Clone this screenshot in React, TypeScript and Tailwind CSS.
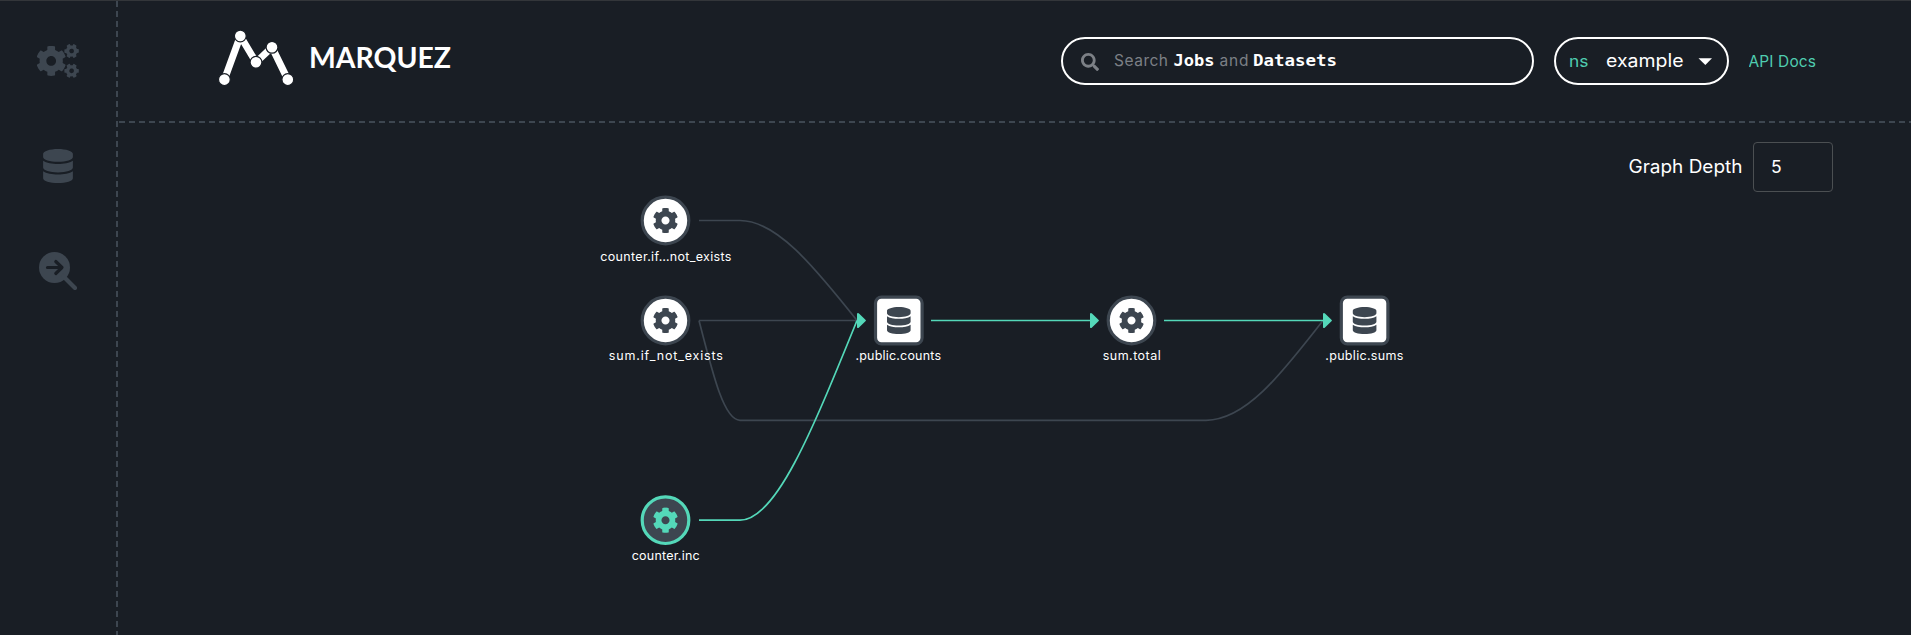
import { FaDatabase, FaSearch, FaCog } from 'react-icons/fa';

type GraphNode = { x: number; y: number; label: string; width: number; labelX: number; kind: 'job' | 'dataset'; selected?: boolean };

const nodes: GraphNode[] = [
  { x: 665.5, y: 220.5, label: 'counter.if…not_exists', width: 131, labelX: 600.3, kind: 'job' },
  { x: 665.5, y: 320.5, label: 'sum.if_not_exists', width: 114, labelX: 608.8, kind: 'job' },
  { x: 898.8, y: 320.5, label: '.public.counts', width: 85.5, labelX: 855.5, kind: 'dataset' },
  { x: 1131.5, y: 320.5, label: 'sum.total', width: 58, labelX: 1102.7, kind: 'job' },
  { x: 1364.6, y: 320.5, label: '.public.sums', width: 78, labelX: 1325.3, kind: 'dataset' },
  { x: 665.5, y: 520.2, label: 'counter.inc', width: 68, labelX: 631.7, kind: 'job', selected: true },
];

const grayEdges = [
  'M699 220.5H740C776 220.5 813 265 857 320.5',
  'M699 320.5H857',
  'M699 320.5C713 375 724 420.3 740 420.3H1206C1245 420.3 1280 376 1323 320.5',
];
const greenEdges = ['M699 520.2H740C776 520.2 812 431 857 320.5', 'M931 320.5H1091', 'M1164 320.5H1324'];
const arrows = [857, 1090, 1323];

function Logo() {
  const dots = [[24.4, 69.6], [40.3, 26], [56, 52.3], [72, 37.3], [87.8, 69.6]];
  return (
    <svg className="h-[64px] w-[80px] shrink-0" viewBox="16 16 80 64">
      <path d="M24.4 69.6L40.3 26L56 52.3L72 37.3L87.8 69.6" fill="none" stroke="#fff" strokeWidth="7" strokeLinejoin="bevel" />
      {dots.map(([x, y]) => (
        <circle key={x} cx={x} cy={y} r="5.9" fill="#fff" stroke="#191e25" strokeWidth="1.2" />
      ))}
    </svg>
  );
}

function Sidebar() {
  return (
    <aside className="flex w-[118px] shrink-0 flex-col items-center pr-[2px] pt-[44px] text-[#3d4650]">
      <svg className="h-[34px] w-[42px]" viewBox="0 0 42 34">
        <FaCog x={-1.3} y={1.4} size={31} />
        <g transform="translate(34.6 7) rotate(30)">
          <FaCog x={-7.5} y={-7.5} size={15} />
        </g>
        <g transform="translate(34.6 26.8) rotate(30)">
          <FaCog x={-7.5} y={-7.5} size={15} />
        </g>
      </svg>
      <FaDatabase className="mt-[71px] h-[34px] w-[30px]" />
      <svg className="mt-[69px] h-[38px] w-[38px]" viewBox="0 0 38 38" fill="none">
        <circle cx="15.5" cy="15.5" r="15.5" fill="currentColor" />
        <path d="M24 24L36 36" stroke="currentColor" strokeWidth="4.2" strokeLinecap="round" />
        <path d="M8.5 15.5H22M16.8 9.5L23 15.5L16.8 21.5" stroke="#191e25" strokeWidth="3.2" strokeLinecap="round" strokeLinejoin="round" />
      </svg>
    </aside>
  );
}

function Header() {
  return (
    <header className="flex h-[121px] items-start pl-[98px]">
      <div className="flex pt-[26px]">
        <Logo />
        <svg className="h-[64px] w-[160px]" viewBox="0 0 160 64">
          <text x="13" y="41.5" fill="#fff" textLength="142" lengthAdjust="spacingAndGlyphs" className="font-['Lato',sans-serif] text-[28px] font-bold">MARQUEZ</text>
        </svg>
      </div>
      <div className="ml-auto mr-[93px] mt-[37px] flex h-[48px] items-center">
        <div className="flex h-[48px] w-[473px] items-center rounded-full border-2 border-white pl-[18px]">
          <FaSearch className="mt-[2px] h-[18px] w-[18px] text-[#7c8086]" />
          <svg className="ml-[15px] h-[30px] w-[230px]" viewBox="0 0 230 30">
            <g className="font-['Inter',sans-serif] text-[15.5px]" fill="#7c8086">
              <text x="0" y="20" textLength="54">Search</text>
              <text x="105.5" y="20" textLength="29">and</text>
            </g>
            <g className="font-['DejaVu_Sans_Mono',monospace] text-[16px] font-bold" fill="#fff">
              <text x="59.5" y="20" textLength="41" lengthAdjust="spacingAndGlyphs">Jobs</text>
              <text x="139" y="20" textLength="84" lengthAdjust="spacingAndGlyphs">Datasets</text>
            </g>
          </svg>
        </div>
        <div className="ml-[20px] flex h-[48px] w-[175px] items-center rounded-full border-2 border-white">
          <svg className="h-[40px] w-[171px]" viewBox="0 0 171 40">
            <g className="font-['Inter',sans-serif]">
              <text x="13" y="26" fill="#4fcdb0" textLength="19.5" lengthAdjust="spacingAndGlyphs" className="text-[16.5px]">ns</text>
              <text x="50" y="25.7" fill="#fff" textLength="77.5" lengthAdjust="spacingAndGlyphs" className="text-[18px]">example</text>
            </g>
            <path d="M142.5 17.3H156L149.3 24Z" fill="#fff" />
          </svg>
        </div>
        <svg className="ml-[20px] h-[40px] w-[69px]" viewBox="0 0 69 40">
          <text x="-0.5" y="26" fill="#4fcdb0" textLength="67.5" className="font-['Inter',sans-serif] text-[15.5px]">API Docs</text>
        </svg>
      </div>
    </header>
  );
}

function DepthControl() {
  return (
    <div className="flex items-center justify-end pr-[78px] pt-[21px]">
      <svg className="mr-[9px] h-[50px] w-[116px]" viewBox="0 0 116 50">
        <text x="0.5" y="31" fill="#fff" textLength="114" lengthAdjust="spacingAndGlyphs" className="font-['Inter',sans-serif] text-[18px]">Graph Depth</text>
      </svg>
      <div className="flex h-[50px] w-[80px] items-center rounded-[4px] border border-[#4b4f52] pl-[17px] pt-[1px] font-['Inter',sans-serif] text-[17.5px] text-white">5</div>
    </div>
  );
}

function Node({ node }: { node: GraphNode }) {
  const { x, y, selected } = node;
  const ring = selected ? '#54d8b9' : '#3d4650';
  const fill = selected ? '#3d4650' : '#fff';
  return (
    <g>
      {node.kind === 'job' ? (
        <>
          <circle cx={x} cy={y} r="23.3" fill={fill} stroke={ring} strokeWidth="3.2" />
          <FaCog x={x - 13} y={y - 13} size={26} color={ring} />
        </>
      ) : (
        <>
          <rect x={x - 23.3} y={y - 23.3} width="46.6" height="46.6" rx="6" fill={fill} stroke={ring} strokeWidth="3.2" />
          <FaDatabase x={x - 13.5} y={y - 13.5} size={27} color={ring} />
        </>
      )}
      <text x={node.labelX} y={y === 220.5 ? 260.8 : y + 39.8} textLength={node.width} fill="#fff" className="font-['Inter',sans-serif] text-[12.5px]">{node.label}</text>
    </g>
  );
}

export default function App() {
  return (
    <div className="relative flex h-[635px] w-[1911px] overflow-hidden bg-[#191e25]">
      <Sidebar />
      <main className="flex-1">
        <Header />
        <DepthControl />
      </main>
      <svg className="pointer-events-none absolute inset-0" width="1911" height="635" viewBox="0 0 1911 635" fill="none">
        <path d="M0 0.5H1911" stroke="#33363a" />
        <path d="M117 1V635" stroke="#3d4650" strokeWidth="2" strokeDasharray="6 4" />
        <path d="M119 122H1911" stroke="#3d4650" strokeWidth="2" strokeDasharray="6 4" />
        {grayEdges.map((d) => <path key={d} d={d} stroke="#3d4650" strokeWidth="1.7" />)}
        {greenEdges.map((d) => <path key={d} d={d} stroke="#54d8b9" strokeWidth="1.7" />)}
        {arrows.map((x) => (
          <path key={x} d={`M${x} 313.5V327.5Q${x + 1} 328.5 ${x + 2} 327.5L${x + 8.7} 321Q${x + 9.2} 320.5 ${x + 8.7} 320L${x + 2} 313.5Q${x + 1} 312.5 ${x} 313.5Z`} fill="#54d8b9" />
        ))}
        {nodes.map((node) => <Node key={node.label} node={node} />)}
      </svg>
    </div>
  );
}
